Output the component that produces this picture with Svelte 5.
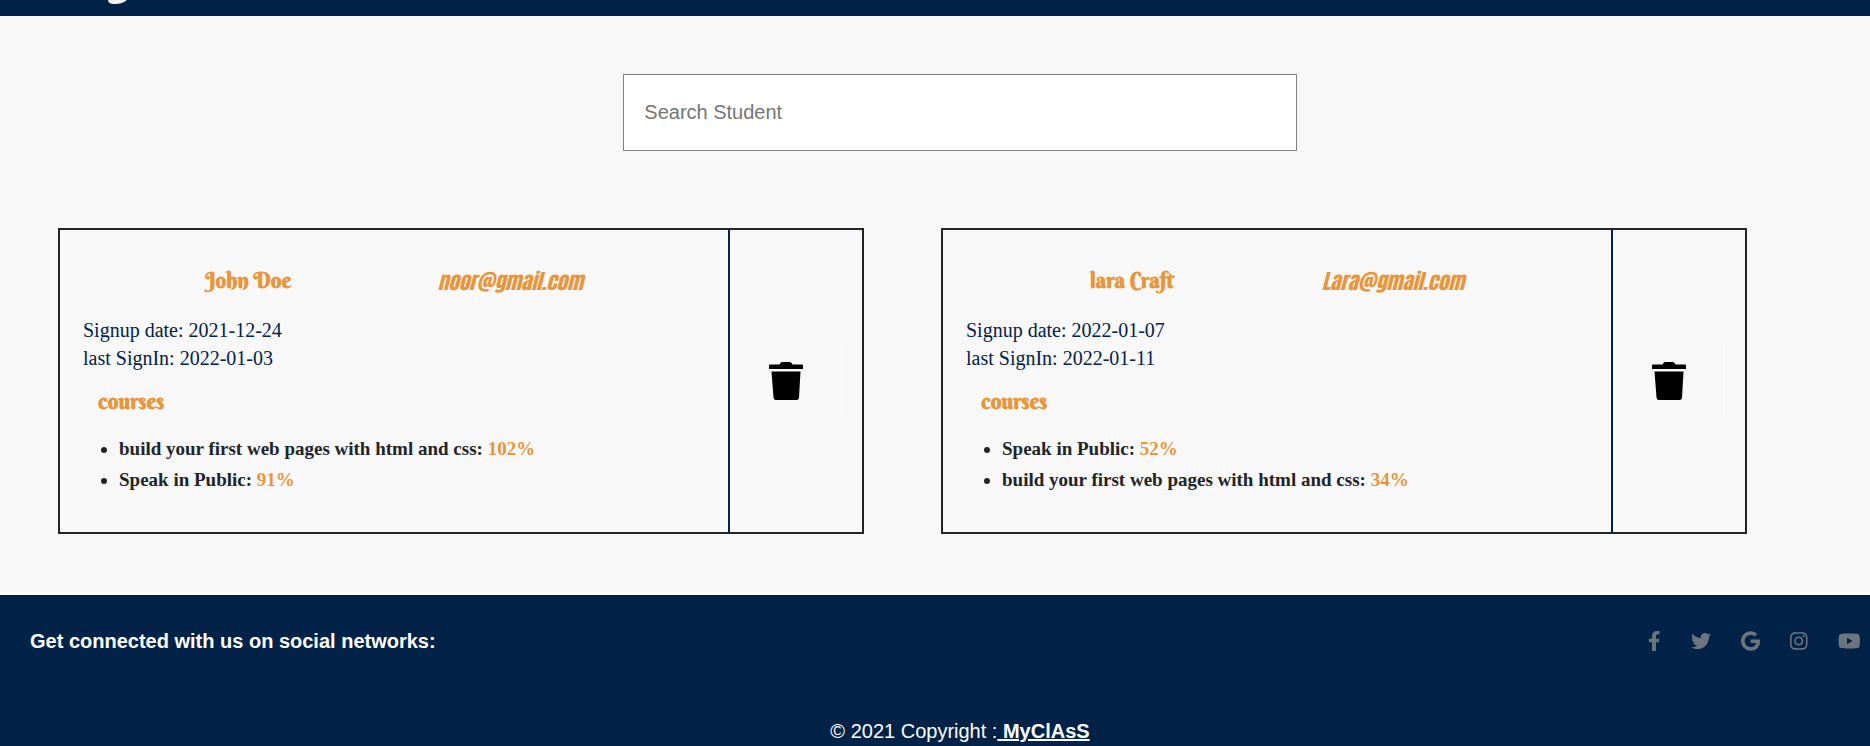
<script>
  const students = [
    {
      name: 'John Doe',
      email: 'noor@gmail.com',
      signup: '2021-12-24',
      signin: '2022-01-03',
      courses: [
        { title: 'build your first web pages with html and css', progress: 102 },
        { title: 'Speak in Public', progress: 91 }
      ]
    },
    {
      name: 'lara Craft',
      email: 'Lara@gmail.com',
      signup: '2022-01-07',
      signin: '2022-01-11',
      courses: [
        { title: 'Speak in Public', progress: 52 },
        { title: 'build your first web pages with html and css', progress: 34 }
      ]
    }
  ];

  const networks = [
    { name: 'Facebook', w: 320, d: 'M279.14 288l14.22-92.66h-88.91v-60.13c0-25.35 12.42-50.06 52.24-50.06h40.42V6.26S260.43 0 225.36 0c-73.22 0-121.08 44.38-121.08 124.72v70.62H22.89V288h81.39v224h100.17V288z' },
    { name: 'Twitter', w: 512, d: 'M459.37 151.716c.325 4.548.325 9.097.325 13.645 0 138.72-105.583 298.558-298.558 298.558-59.452 0-114.68-17.219-161.137-47.106 8.447.974 16.568 1.299 25.34 1.299 49.055 0 94.213-16.568 130.274-44.832-46.132-.975-84.792-31.188-98.112-72.772 6.498.974 12.995 1.624 19.818 1.624 9.421 0 18.843-1.3 27.614-3.573-48.081-9.747-84.143-51.98-84.143-102.985v-1.299c13.969 7.797 30.214 12.67 47.431 13.319-28.264-18.843-46.781-51.005-46.781-87.391 0-19.492 5.197-37.36 14.294-52.954 51.655 63.675 129.3 105.258 216.365 109.807-1.624-7.797-2.599-15.918-2.599-24.04 0-57.828 46.782-104.934 104.934-104.934 30.213 0 57.502 12.67 76.67 33.137 23.715-4.548 46.456-13.32 66.599-25.34-7.798 24.366-24.366 44.833-46.132 57.827 21.117-2.273 41.584-8.122 60.426-16.243-14.292 20.791-32.161 39.308-52.628 54.253z' },
    { name: 'Google', w: 488, d: 'M488 261.8C488 403.3 391.1 504 248 504 110.8 504 0 393.2 0 256S110.8 8 248 8c66.8 0 123 24.5 166.3 64.9l-67.5 64.9C258.5 52.6 94.3 116.6 94.3 256c0 86.5 69.1 156.6 153.7 156.6 98.2 0 135-70.4 140.8-106.9H248v-85.3h236.1c2.3 12.7 3.9 24.9 3.9 41.4z' },
    { name: 'Instagram', w: 448, d: 'M224.1 141c-63.6 0-114.9 51.3-114.9 114.9s51.3 114.9 114.9 114.9S339 319.500 339 255.900 287.700 141 224.100 141zm0 189.600c-41.100 0-74.700-33.500-74.700-74.700s33.500-74.700 74.700-74.700 74.700 33.500 74.700 74.700-33.600 74.700-74.700 74.700zm146.400-194.300c0 14.900-12 26.800-26.800 26.800-14.900 0-26.800-12-26.800-26.800s12-26.800 26.800-26.800 26.800 12 26.800 26.800zm76.100 27.200c-1.700-35.900-9.900-67.700-36.200-93.900-26.200-26.200-58-34.400-93.900-36.200-37-2.100-147.900-2.100-184.900 0-35.800 1.700-67.600 9.900-93.900 36.100s-34.400 58-36.200 93.900c-2.100 37-2.100 147.900 0 184.900 1.700 35.900 9.900 67.700 36.200 93.900s58 34.400 93.900 36.200c37 2.100 147.900 2.100 184.900 0 35.900-1.700 67.700-9.900 93.900-36.200 26.200-26.200 34.400-58 36.200-93.900 2.100-37 2.100-147.800 0-184.800zM398.800 388c-7.800 19.600-22.900 34.700-42.600 42.600-29.500 11.700-99.500 9-132.100 9s-102.700 2.600-132.100-9c-19.600-7.800-34.700-22.900-42.600-42.600-11.700-29.500-9-99.500-9-132.100s-2.600-102.700 9-132.100c7.800-19.600 22.900-34.700 42.600-42.600 29.500-11.700 99.500-9 132.100-9s102.700-2.600 132.100 9c19.600 7.800 34.700 22.900 42.600 42.600 11.700 29.500 9 99.500 9 132.100s2.700 102.700-9 132.100z' },
    { name: 'YouTube', w: 576, d: 'M549.655 124.083c-6.281-23.650-24.787-42.276-48.284-48.597C458.781 64 288 64 288 64S117.220 64 74.629 75.486c-23.497 6.322-42.003 24.947-48.284 48.597-11.412 42.867-11.412 132.305-11.412 132.305s0 89.438 11.412 132.305c6.281 23.650 24.787 41.500 48.284 47.821C117.220 448 288 448 288 448s170.780 0 213.371-11.486c23.497-6.321 42.003-24.171 48.284-47.821 11.412-42.867 11.412-132.305 11.412-132.305s0-89.438-11.412-132.305zm-317.510 213.508V175.185l142.739 81.205-142.739 81.201z' }
  ];

  let query = $state('');
  let removed = $state([]);
  const shown = $derived(
    students.filter((s) => !removed.includes(s.email) && s.name.toLowerCase().includes(query.toLowerCase()))
  );
</script>

<header>
  <svg width="24" height="6" viewBox="0 0 24 6" aria-hidden="true">
    <path d="M2 0C2 2.500 4 4 9 4C14 4 18 2.500 21 0Z" fill="#f8f1ee" />
  </svg>
</header>

<main>
  <div class="search">
    <input type="search" placeholder="Search Student" aria-label="Search Student" bind:value={query} />
  </div>

  <div class="students">
    {#each shown as student (student.email)}
      <article>
        <div class="info">
          <div class="identity">
            <h2>{student.name}</h2>
            <h2 class="email">{student.email}</h2>
          </div>
          <p>Signup date: {student.signup}</p>
          <p>last SignIn: {student.signin}</p>
          <h3>courses</h3>
          <ul>
            {#each student.courses as course}
              <li>{course.title}: <span>{course.progress}%</span></li>
            {/each}
          </ul>
        </div>
        <div class="actions">
          <button aria-label="Delete {student.name}" onclick={() => (removed = [...removed, student.email])}>
            <svg width="34" height="38" viewBox="0 0 34 38" aria-hidden="true">
              <path d="M0 3.500Q0 2.500 1 2.500H10.500L11.500 1Q12 0 13.500 0H20.500Q22 0 22.500 1L23.500 2.500H33Q34 2.500 34 3.500V7H0ZM2.500 9.500H31.500L30 35.500Q29.800 38 27.500 38H7Q4.700 38 4.500 35.500Z" />
            </svg>
          </button>
        </div>
      </article>
    {/each}
  </div>
</main>

<footer>
  <div class="social">
    <strong>Get connected with us on social networks:</strong>
    <nav aria-label="Social networks">
      {#each networks as n}
        <a href="#{n.name}" aria-label={n.name}>
          <svg height="20" viewBox="0 0 {n.w} 512" aria-hidden="true"><path d={n.d} /></svg>
        </a>
      {/each}
    </nav>
  </div>
  <div class="copyright">© 2021 Copyright :<a href="#home">&nbsp;MyClAsS</a></div>
</footer>

<style>
  :global(body) {
    margin: 0;
    background: #fff;
    overflow: hidden;
  }
  header {
    height: 16px;
    padding-left: 106px;
    background: #022247;
  }
  header svg {
    display: block;
  }
  main {
    padding: 58px 0;
    background: #f8f8f8;
  }
  .search {
    display: flex;
    justify-content: center;
    padding-left: 50px;
  }
  input {
    box-sizing: border-box;
    width: 37%;
    height: 77px;
    padding: 0 20px;
    border: 1px solid #808080;
    border-radius: 0;
    background: #fff;
    font: 20px "Liberation Sans", Arial, sans-serif;
    appearance: none;
  }
  input::placeholder {
    color: #757575;
    opacity: 1;
  }
  .students {
    display: grid;
    grid-template-columns: 1fr 1fr;
    gap: 77px;
    margin: 77px 123px 0 58px;
    font-family: "Liberation Serif", "Times New Roman", serif;
  }
  article {
    display: grid;
    grid-template-columns: 5fr 1fr;
    border: 2px solid #212529;
  }
  .info {
    padding: 36px 23px 37px;
    color: #022247;
    font-size: 20px;
    line-height: 28px;
  }
  .identity {
    display: flex;
    justify-content: space-evenly;
    gap: 24px;
    margin-bottom: 20px;
  }
  h2,
  h3 {
    margin: 0;
    color: #e8963c;
    font-family: "Berkshire Swash", "Liberation Serif", serif;
    font-size: 21px;
    font-weight: bold;
    line-height: 30px;
  }
  .email {
    font-family: Impact, Anton, "Roboto Condensed", "Liberation Sans", sans-serif;
    font-style: italic;
    font-weight: normal;
  }
  p {
    margin: 0;
  }
  h3 {
    margin: 15px 15px 16px;
  }
  ul {
    margin: 0;
    padding-left: 36px;
    color: #212529;
    font-size: 19px;
    font-weight: bold;
    line-height: 31px;
  }
  li span {
    color: #e8963c;
  }
  .actions {
    display: flex;
    align-items: center;
    border-left: 2px solid #022247;
  }
  button {
    display: flex;
    align-items: center;
    justify-content: center;
    width: 112px;
    height: 76px;
    padding: 0;
    border: 0;
    border-right: 1px solid #fff;
    background: none;
    cursor: pointer;
  }
  footer {
    margin-top: 3px;
    background: #022247;
    color: #fff;
    font: 20px/30px "Liberation Sans", Arial, sans-serif;
  }
  .social {
    display: flex;
    align-items: center;
    justify-content: space-between;
    padding: 31px 10px 53px 30px;
  }
  nav {
    display: flex;
    gap: 30px;
  }
  nav a {
    display: flex;
  }
  nav svg {
    fill: #6c757d;
  }
  .copyright {
    padding: 7px 0 24px 50px;
    text-align: center;
  }
  .copyright a {
    color: #fff;
    font-weight: bold;
  }
</style>
